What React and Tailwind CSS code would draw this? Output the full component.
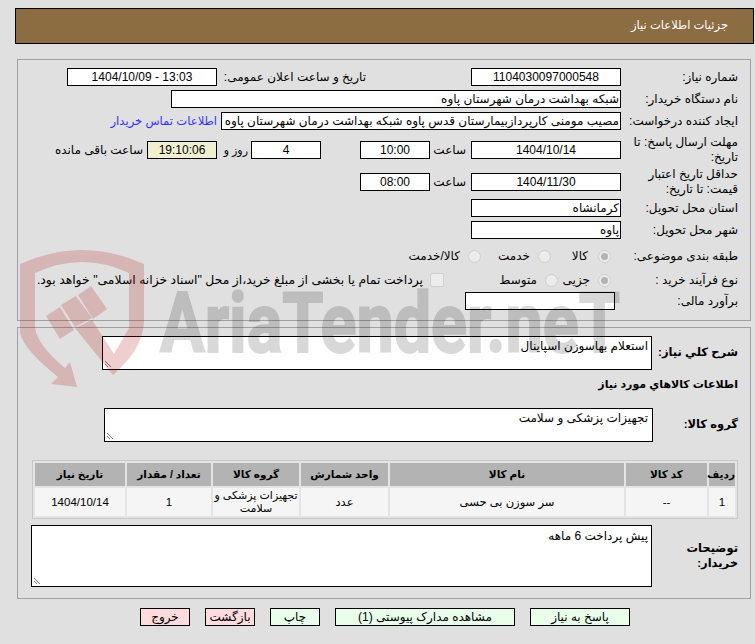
import React from 'react';

const font = { fontFamily: '"Liberation Sans", "DejaVu Sans", sans-serif' };

const Box = ({ w, children, className = '', left }) => (
  <div
    className={`h-[18px] border border-black bg-white text-[12px] leading-[16px] px-px whitespace-nowrap overflow-hidden shrink-0 ${left ? 'text-center' : 'text-right'} ${w} ${className}`}
  >
    {children}
  </div>
);

const Label = ({ children, className = '' }) => (
  <div className={`w-[129px] shrink-0 pr-3 text-[12px] leading-[15px] text-black ${className}`}>{children}</div>
);

const Radio = ({ on }) => (
  <span className="w-[13px] h-[13px] rounded-full border border-[#cfcfcf] bg-[#ececec] flex items-center justify-center shrink-0">
    {on && <span className="w-[7px] h-[7px] rounded-full bg-[#b4b4b4]" />}
  </span>
);

const Btn = ({ children, w, red }) => (
  <button className={`h-[18px] border border-black text-[12px] leading-[16px] text-black ${w} ${red ? 'bg-[#ffdcdc]' : 'bg-[#eaffea]'}`}>
    {children}
  </button>
);

const Th = ({ children, className = '' }) => (
  <th className={`bg-[#b3b3b3] h-[23px] p-0 text-[10.5px] font-bold text-black text-center ${className}`}>{children}</th>
);

const Td = ({ children, className = '' }) => (
  <td className={`bg-[#f5f5f5] h-[28px] p-0 text-[11.5px] leading-[13px] text-black text-center ${className}`}>{children}</td>
);

const Resize = () => (
  <svg className="absolute left-px bottom-px" width="8" height="8" viewBox="0 0 8 8">
    <path d="M1 1l6 6M1 4l3 3" stroke="#777" strokeWidth="1" fill="none" />
  </svg>
);

// faded site logo that sits over the form
const Watermark = () => (
  <svg className="absolute left-0 top-0 pointer-events-none" width="755" height="644" viewBox="0 0 755 644" dir="ltr">
    <g opacity="0.2" fill="#b01010">
      <path d="M20 264 Q82 236 144 264 V323 Q142 350 113 375 L75 328 L92 320 L114 354 L129 328 V273 Q82 251 35 273 V327 Q37 345 65 368 L70 362 L77 387 L51 384 L58 377 Q24 350 20 333 Z" />
      <path d="M46 316L60 307L74 330L60 339Z" />
      <path d="M61 305L76 296L92 318L75 327Z" />
      <path d="M78 295L91 286L107 309L93 319Z" />
    </g>
    <text
      x="160"
      y="352"
      textLength="460"
      lengthAdjust="spacingAndGlyphs"
      fontFamily="Roboto, sans-serif"
      fontWeight="700"
      fontSize="84"
      fill="#000"
      stroke="#000"
      strokeWidth="2"
      opacity="0.15"
      style={{ direction: 'ltr' }}
    >
      AriaTender.neT
    </text>
  </svg>
);

export default function App() {
  return (
    <div className="relative w-[755px] h-[644px] bg-[#e0e0e0] overflow-hidden" style={font} dir="rtl">
      <div className="pt-2 pl-[15px] pr-px">
        <div className="h-[36px] bg-[#8c6d42] border border-black flex items-center pr-[25px] text-[11.5px] text-white">
          جزئیات اطلاعات نیاز
        </div>
      </div>

      <div className="ml-[17px] mr-[4px] mt-[15px] h-[262px] border border-[#a0a0a0] pt-2">
        <div className="flex items-center h-[18px]">
          <Label>شماره نیاز:</Label>
          <Box w="w-[150px]" left>1104030097000548</Box>
          <div className="w-[254px] pr-[105px] text-[12px] whitespace-nowrap">تاریخ و ساعت اعلان عمومی:</div>
          <Box w="w-[150px]" left><span dir="ltr">1404/10/09 - 13:03</span></Box>
        </div>
        <div className="flex items-center h-[18px] mt-1">
          <Label>نام دستگاه خریدار:</Label>
          <Box w="w-[450px]">شبکه بهداشت درمان شهرستان پاوه</Box>
        </div>
        <div className="flex items-center h-[18px] mt-1">
          <Label>ایجاد کننده درخواست:</Label>
          <Box w="w-[400px]">مصیب مومنی کارپردازبیمارستان قدس پاوه شبکه بهداشت درمان شهرستان پاوه</Box>
          <a className="pr-[4px] text-[11.6px] text-[#3333ff] whitespace-nowrap">اطلاعات تماس خریدار</a>
        </div>
        <div className="flex items-center h-[30px] mt-[5px]">
          <Label>مهلت ارسال پاسخ: تا تاریخ:</Label>
          <Box w="w-[150px]" left>1404/10/14</Box>
          <div className="w-[41px] pr-[5px] text-[12px]">ساعت</div>
          <Box w="w-[70px]" left>10:00</Box>
          <div className="w-[39px]" />
          <Box w="w-[70px]" left>4</Box>
          <div className="w-[34px] pr-[3px] text-[11px]">روز و</div>
          <Box w="w-[70px] !bg-[#f0f0d0]" left>19:10:06</Box>
          <div className="pr-1 text-[12px] whitespace-nowrap">ساعت باقی مانده</div>
        </div>
        <div className="flex items-center h-[30px] mt-[2px]">
          <Label>حداقل تاریخ اعتبار قیمت: تا تاریخ:</Label>
          <Box w="w-[150px]" left>1404/11/30</Box>
          <div className="w-[41px] pr-[5px] text-[12px]">ساعت</div>
          <Box w="w-[70px]" left>08:00</Box>
        </div>
        <div className="flex items-center h-[18px] mt-[2px]">
          <Label>استان محل تحویل:</Label>
          <Box w="w-[150px]">کرمانشاه</Box>
        </div>
        <div className="flex items-center h-[18px] mt-1">
          <Label>شهر محل تحویل:</Label>
          <Box w="w-[150px]">پاوه</Box>
        </div>
        <div className="flex items-center h-[18px] mt-[8px] text-[12px]">
          <Label>طبقه بندی موضوعی:</Label>
          <div className="flex items-center w-[70px] pr-[10px] gap-[10px]"><Radio on /><span>کالا</span></div>
          <div className="flex items-center w-[70px] pr-0 gap-[8px]"><Radio /><span>خدمت</span></div>
          <div className="flex items-center gap-[8px]"><Radio /><span>کالا/خدمت</span></div>
        </div>
        <div className="flex items-center h-[18px] mt-[6px] text-[12px]">
          <Label>نوع فرآیند خرید :</Label>
          <div className="flex items-center w-[63px] pr-[10px] gap-[8px]"><Radio on /><span>جزیی</span></div>
          <div className="flex items-center w-[114px] gap-[8px]"><Radio /><span>متوسط</span></div>
          <div className="flex items-center gap-[7px] whitespace-nowrap">
            <span className="w-[14px] h-[14px] rounded-[2px] border border-[#cfcfcf] bg-[#ececec] shrink-0" />
            <span className="text-[12.4px]">پرداخت تمام یا بخشی از مبلغ خرید،از محل "اسناد خزانه اسلامی" خواهد بود.</span>
          </div>
        </div>
        <div className="flex items-center h-[18px] mt-[3px]">
          <Label>برآورد مالی:</Label>
          <Box w="w-[150px] mr-[6px]" />
        </div>
      </div>

      <div className="ml-[17px] mr-[4px] mt-[6px] h-[272px] border border-[#a0a0a0] pt-2">
        <div className="flex items-center">
          <div className="w-[98px] shrink-0 pr-3 text-[11.5px] font-bold whitespace-nowrap">شرح کلي نیاز:</div>
          <div className="relative w-[550px] h-[34px] border border-black bg-white text-[12px] leading-[18px] px-[3px]"><Resize />استعلام بهاسوزن اسپاینال</div>
        </div>
        <div className="pr-3 mt-[5px] h-[18px] text-[11px] leading-[18px] font-bold">اطلاعات کالاهاي مورد نیاز</div>
        <div className="flex items-center mt-[15px]">
          <div className="w-[97px] shrink-0 pr-3 text-[11.5px] font-bold">گروه کالا:</div>
          <div className="relative w-[549px] h-[34px] border border-black bg-white text-[12px] leading-[18px] px-[4px]"><Resize />تجهیزات پزشکی و سلامت</div>
        </div>
        <div className="mr-[12px] mt-[18px]">
          <table className="w-[706px] border-separate border-spacing-[2px] bg-[#e4e4e4] border border-[#c8c8c8] table-fixed">
            <thead>
              <tr>
                <Th className="w-[26px]">ردیف</Th>
                <Th className="w-[81px]">کد کالا</Th>
                <Th className="w-[234px]">نام کالا</Th>
                <Th className="w-[87px]">واحد شمارش</Th>
                <Th className="w-[86px]">گروه کالا</Th>
                <Th className="w-[84px]">تعداد / مقدار</Th>
                <Th>تاریخ نیاز</Th>
              </tr>
            </thead>
            <tbody>
              <tr>
                <Td>1</Td>
                <Td>--</Td>
                <Td>سر سوزن بی حسی</Td>
                <Td>عدد</Td>
                <Td><span className="block text-[11px]">تجهیزات پزشکی و سلامت</span></Td>
                <Td>1</Td>
                <Td>1404/10/14</Td>
              </tr>
            </tbody>
          </table>
        </div>
        <div className="flex items-center mt-[6px]">
          <div className="w-[98px] shrink-0 pr-3 text-[11.5px] leading-[15px] font-bold">توضیحات خریدار:</div>
          <div className="relative w-[621px] h-[62px] border border-black bg-white text-[12px] leading-[20px] px-[3px]"><Resize />پیش پرداخت 6 ماهه</div>
        </div>
      </div>

      <div className="flex justify-start gap-[15px] mr-[125px] mt-[9px]">
        <Btn w="w-[100px]">پاسخ به نیاز</Btn>
        <Btn w="w-[180px]">مشاهده مدارک پیوستی (1)</Btn>
        <Btn w="w-[50px]">چاپ</Btn>
        <Btn w="w-[50px]" red>بازگشت</Btn>
        <Btn w="w-[50px]" red>خروج</Btn>
      </div>

      <Watermark />
    </div>
  );
}
